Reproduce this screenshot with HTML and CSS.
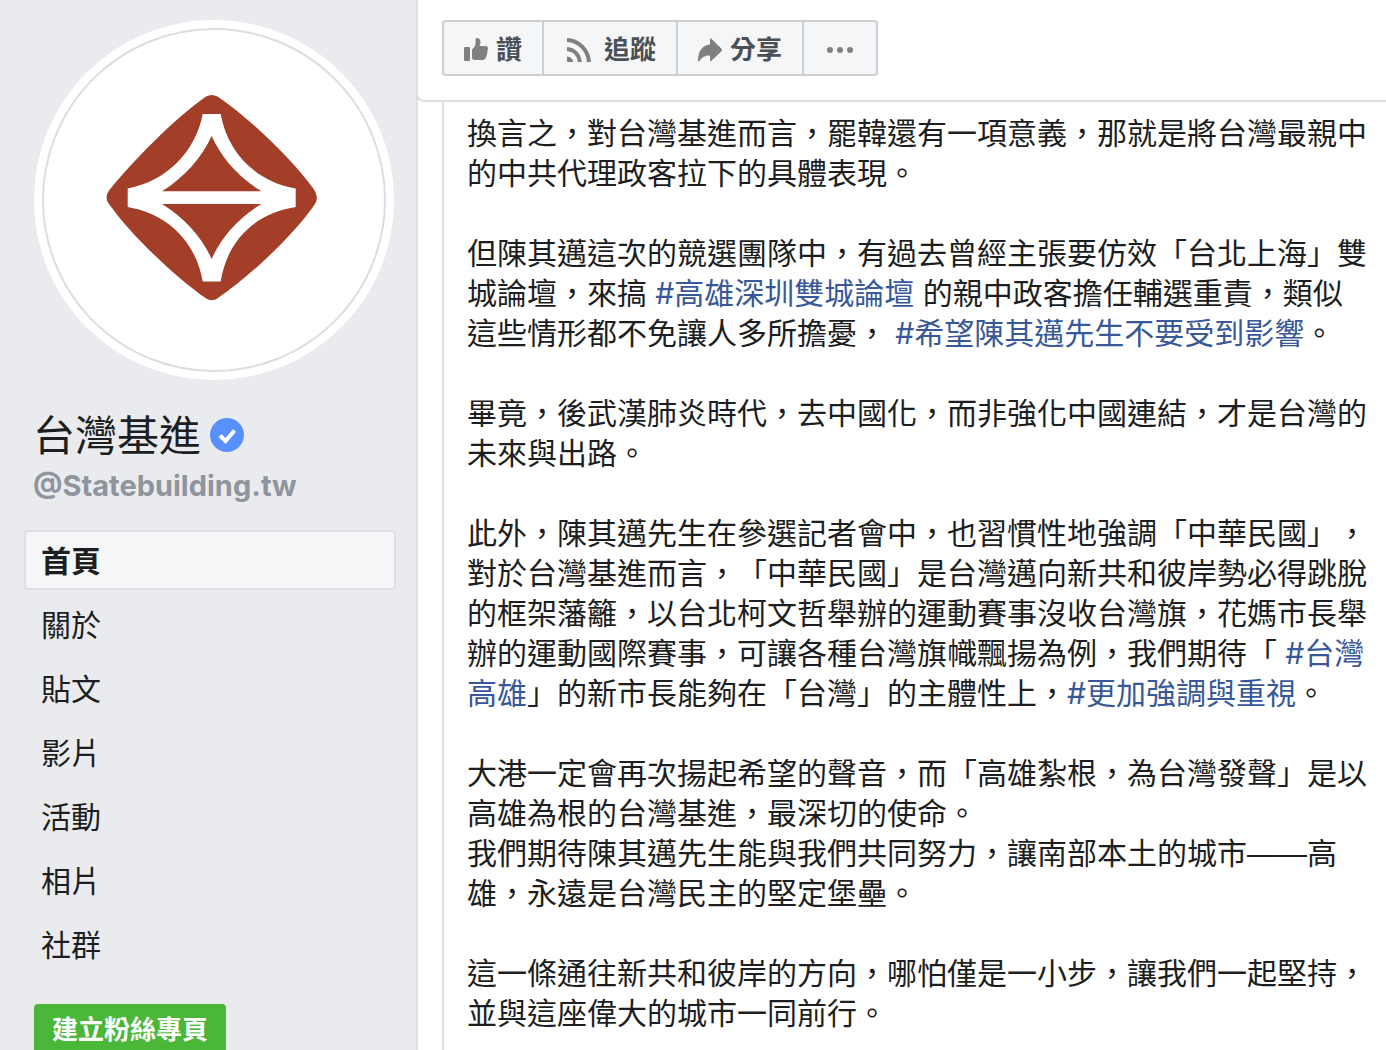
FILE: index.html
```
<!doctype html>
<html lang="zh-Hant">
<head>
  <meta charset="utf-8">
  <meta name="viewport" content="width=device-width, initial-scale=1">
  <title>台灣基進</title>
  <link rel="stylesheet" href="styles.css">
</head>
<body>
  <div class="page">

    <aside class="sidebar">
      <a class="avatar" href="#" aria-label="台灣基進">
        <svg viewBox="0 0 240 240" width="240" height="240" aria-hidden="true">
          <path fill="#a33f28" d="M116 16.5Q121.700 13.500 127.500 16.500C158 37 199 76 223 108Q229.500 117.500 225 124C203 156 160 196 128 218Q121.700 222.500 115.500 218C84 196 41 155 19 124Q14 117.500 19 110.500C43 81 84 39 116 16.500Z"/>
          <path fill="#fff" d="M112.700 34H130.700C137 70 163 101 205.700 108.500V127C163 134 137 162 130.700 201.500H112.700C106 162 78 134 37.700 127V108.500C78 101 106 70 112.700 34Z"/>
          <path fill="#a33f28" d="M121.700 56C131 77 148 97 171.500 111.300H72C95 97 112 77 121.700 56ZM72 124H171.500C148 138 131 158 121.700 179C112 158 95 138 72 124Z"/>
        </svg>
      </a>

      <h1 class="page-name">
        <a href="#">台灣基進</a>
        <svg class="verified" viewBox="0 0 34 34" width="34" height="34" role="img" aria-label="已驗證">
          <circle cx="17" cy="17" r="17" fill="#5890ff"/>
          <path d="M10 17.500L15.500 23L24.500 12.500" fill="none" stroke="#fff" stroke-width="4"/>
        </svg>
      </h1>
      <a class="handle" href="#">@Statebuilding.tw</a>

      <nav class="menu">
        <a class="active" href="#">首頁</a>
        <a href="#">關於</a>
        <a href="#">貼文</a>
        <a href="#">影片</a>
        <a href="#">活動</a>
        <a href="#">相片</a>
        <a href="#">社群</a>
      </nav>

      <button type="button" class="create">建立粉絲專頁</button>
    </aside>

    <main class="content">
      <header class="toolbar">
        <div class="actions">
          <button type="button">
            <svg viewBox="0 0 24 24" width="24" height="24" aria-hidden="true">
              <rect x="0" y="9" width="6" height="14" rx="1"/>
              <path d="M8 11.500C10 9.500 11.500 8 11.500 5V1.500Q11.500 0 13 0C15.500 0 16.500 2 16.500 4Q16.500 6 15.500 8H21.500Q24 8 24 10.500Q24 12 23.300 12.800Q24 15 22.800 16.300Q23 18.500 21.700 19.600Q21.500 22 18.500 22H11Q8 22 8 19.500Z"/>
            </svg>
            <span>讚</span>
          </button>
          <button type="button">
            <svg viewBox="0 0 32 28" width="32" height="28" aria-hidden="true">
              <path d="M3 20.500Q9 21 9 26H4.500Q3 26 3 24.500Z"/>
              <path class="wave" d="M3 13C10 13.500 15 18.500 15.800 26M3 4C15 4.500 24 14 25 26"/>
            </svg>
            <span>追蹤</span>
          </button>
          <button type="button">
            <svg viewBox="0 0 24 24" width="24" height="24" aria-hidden="true">
              <path d="M12 1.200Q12 -.5 13.400 .8L23.500 10.800Q24.500 12 23.500 13.200L13.400 22.700Q12 24 12 22.300V17.500C7 17.500 4 19 1.500 23Q0 24.500 0 22C.3 13 4 7.500 12 6.500Z"/>
            </svg>
            <span>分享</span>
          </button>
          <button type="button" aria-label="更多">
            <svg viewBox="0 0 32 24" width="32" height="24" aria-hidden="true">
              <circle cx="6" cy="12" r="3"/>
              <circle cx="16" cy="12" r="3"/>
              <circle cx="26" cy="12" r="3"/>
            </svg>
          </button>
        </div>
      </header>

      <article class="post">
        <p>換言之，對台灣基進而言，罷韓還有一項意義，那就是將台灣最親中的中共代理政客拉下的具體表現。</p>
        <p>但陳其邁這次的競選團隊中，有過去曾經主張要仿效「台北上海」雙城論壇，來搞 <a href="#">#高雄深圳雙城論壇</a> 的親中政客擔任輔選重責，類似這些情形都不免讓人多所擔憂， <a href="#">#希望陳其邁先生不要受到影響</a>。</p>
        <p>畢竟，後武漢肺炎時代，去中國化，而非強化中國連結，才是台灣的未來與出路。</p>
        <p>此外，陳其邁先生在參選記者會中，也習慣性地強調「中華民國」，對於台灣基進而言，「中華民國」是台灣邁向新共和彼岸勢必得跳脫的框架藩籬，以台北柯文哲舉辦的運動賽事沒收台灣旗，花媽市長舉辦的運動國際賽事，可讓各種台灣旗幟飄揚為例，我們期待「 <a href="#">#台灣高雄</a>」的新市長能夠在「台灣」的主體性上，<a href="#">#更加強調與重視</a>。</p>
        <p>大港一定會再次揚起希望的聲音，而「高雄紮根，為台灣發聲」是以高雄為根的台灣基進，最深切的使命。<br>我們期待陳其邁先生能與我們共同努力，讓南部本土的城市——高雄，永遠是台灣民主的堅定堡壘。</p>
        <p>這一條通往新共和彼岸的方向，哪怕僅是一小步，讓我們一起堅持，並與這座偉大的城市一同前行。</p>
      </article>
    </main>

  </div>
</body>
</html>
```

FILE: styles.css
```
* {
  box-sizing: border-box;
}
body {
  margin: 0;
  background: #fff;
  color: #1c1e21;
  font-family: "Liberation Sans", "Noto Sans CJK TC", sans-serif;
}
a {
  color: inherit;
  text-decoration: none;
}
button {
  font-family: inherit;
  cursor: pointer;
}
.page {
  display: flex;
  height: 100vh;
  overflow: hidden;
}

/* left column */
.sidebar {
  flex: 0 0 418px;
  padding: 20px 20px 0 24px;
  background: #e9ebee;
  border-right: 2px solid #dddfe2;
}
.avatar {
  display: flex;
  width: 360px;
  height: 360px;
  margin-left: 10px;
  padding: 8px;
  border-radius: 50%;
  background: #fff;
}
.avatar svg {
  box-sizing: content-box;
  padding: 50px 54px 50px 46px;
  border: 2px solid #dadde1;
  border-radius: 50%;
}
.page-name {
  display: flex;
  align-items: center;
  gap: 9px;
  margin: 32px 0 0 9px;
  font-size: 42px;
  font-weight: 400;
  line-height: 50px;
}
.verified {
  margin-bottom: 4px;
}
.handle {
  display: block;
  margin: 4px 0 24px 9px;
  color: #90949c;
  font-family: Inter, sans-serif;
  font-size: 29px;
  font-weight: 700;
  line-height: 40px;
}
.menu {
  display: flex;
  flex-direction: column;
  gap: 4px;
}
.menu a {
  padding: 10px 15px 6px;
  border: 2px solid transparent;
  border-radius: 4px;
  font-size: 30px;
  line-height: 40px;
}
.menu .active {
  background: #f5f6f7;
  border-color: #dddfe2;
  font-weight: 700;
}
.create {
  margin: 30px 0 0 10px;
  padding: 6px 18px;
  border: 0;
  border-radius: 4px;
  background: #4ab738;
  color: #fff;
  font-size: 26px;
  font-weight: 700;
  line-height: 40px;
}

/* right column */
.content {
  flex: 1;
  min-width: 0;
}
.toolbar {
  padding: 20px 24px 24px;
  border-bottom: 2px solid #dddfe2;
  border-left: 2px solid #dddfe2;
  border-bottom-left-radius: 8px;
  margin-left: -2px;
}
.actions {
  display: inline-flex;
  vertical-align: top;
  border: 2px solid #ccd0d5;
  border-radius: 4px;
  background: #f5f6f7;
}
.actions button {
  display: flex;
  align-items: center;
  gap: 8px;
  height: 52px;
  padding: 4px 20px 0;
  border: 0;
  background: none;
  color: #4b4f56;
  font-size: 26px;
  font-weight: 700;
  line-height: 40px;
}
.actions button + button {
  border-left: 2px solid #ccd0d5;
}
.actions svg {
  fill: #808080;
}
.actions .wave {
  fill: none;
  stroke: #808080;
  stroke-width: 4;
}
.post {
  margin-left: 24px;
  padding: 12px 18px 40px 23px;
  border-left: 2px solid #dddfe2;
  font-size: 30px;
  line-height: 40px;
  text-spacing-trim: space-all;
}
.post p {
  margin: 0 0 40px;
}
.post a {
  color: #385898;
  font-family: Inter, "Noto Sans CJK TC", sans-serif;
  line-height: 1;
}
```
